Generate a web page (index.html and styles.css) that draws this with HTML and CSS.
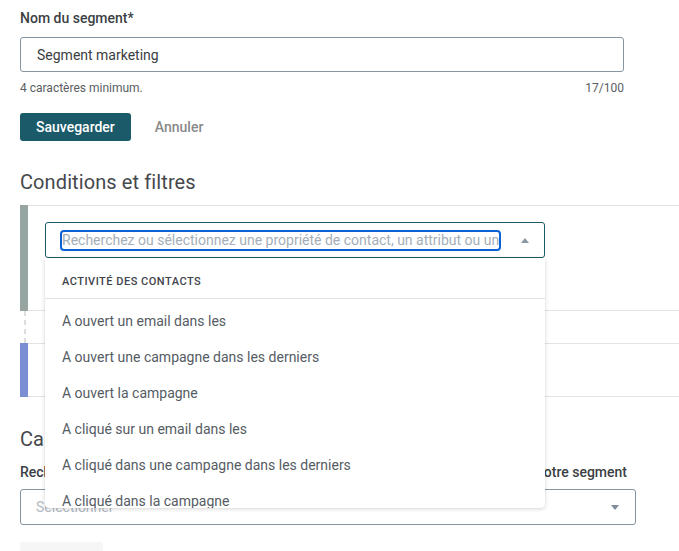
FILE: index.html
```html
<!DOCTYPE html>
<html lang="fr">
<head>
<meta charset="utf-8">
<title>Segment</title>
<link rel="stylesheet" href="styles.css">
</head>
<body>
<main class="page">
  <section class="name-field">
    <label class="field-label" for="segment-name">Nom du segment*</label>
    <input class="text-input" id="segment-name" type="text" value="Segment marketing">
    <div class="helper">
      <span>4 caractères minimum.</span>
      <span>17/100</span>
    </div>
    <div class="actions">
      <button class="btn-primary" type="button">Sauvegarder</button>
      <button class="btn-link" type="button">Annuler</button>
    </div>
  </section>

  <h2 class="section-title">Conditions et filtres</h2>

  <section class="conditions">
    <div class="cond">
      <div class="cond-bar cond-bar-gray"></div>
      <div class="cond-body cond-body-first">
        <div class="prop-select">
          <div class="search">Recherchez ou sélectionnez une propriété de contact, un attribut ou une activité</div>
          <svg class="caret" width="8" height="5" viewBox="0 0 8 5" aria-hidden="true"><polygon points="0,5 4,0 8,5" fill="#8c98a3"/></svg>
          <div class="menu">
            <div class="menu-header">ACTIVITÉ DES CONTACTS</div>
            <ul class="menu-list">
              <li class="menu-item">A ouvert un email dans les</li>
              <li class="menu-item">A ouvert une campagne dans les derniers</li>
              <li class="menu-item">A ouvert la campagne</li>
              <li class="menu-item">A cliqué sur un email dans les</li>
              <li class="menu-item">A cliqué dans une campagne dans les derniers</li>
              <li class="menu-item">A cliqué dans la campagne</li>
            </ul>
          </div>
        </div>
      </div>
    </div>
    <div class="connector"></div>
    <div class="cond">
      <div class="cond-bar cond-bar-blue"></div>
      <div class="cond-body cond-body-second"></div>
    </div>
  </section>

  <section class="calc">
    <h2 class="calc-title">Calculer la taille du segment</h2>
    <div class="calc-label"><span>Recherchez</span><span>Nombre de contacts dans votre segment</span></div>
    <div class="plain-select">
      <span>Sélectionner</span>
      <svg class="caret" width="8" height="5" viewBox="0 0 8 5" aria-hidden="true"><polygon points="0,0 8,0 4,5" fill="#808c97"/></svg>
    </div>
    <div class="ghost-btn"></div>
  </section>
</main>
</body>
</html>
```

FILE: styles.css
```css
* { box-sizing: border-box; }

html, body {
  margin: 0;
  padding: 0;
  background: #fff;
}

body {
  font-family: Roboto, "Noto Sans", "Liberation Sans", sans-serif;
  color: #3d4247;
  width: 679px;
  height: 551px;
  overflow: hidden;
}

.page {
  padding: 8px 0 0 20px;
}

.field-label {
  display: block;
  font-size: 14px;
  line-height: 20px;
  font-weight: 500;
  color: #3b3f44;
  margin-bottom: 9px;
}

.text-input {
  display: block;
  width: 604px;
  height: 35px;
  margin: 0;
  border: 1px solid #8595a2;
  border-radius: 3px;
  padding: 0 16px;
  font-family: inherit;
  font-size: 14px;
  color: #3a3e42;
  background: #fff;
  outline: none;
}

.helper {
  width: 604px;
  display: flex;
  justify-content: space-between;
  margin-top: 8px;
  font-size: 12px;
  line-height: 16px;
  color: #5a5e62;
}

.actions {
  display: flex;
  align-items: center;
  gap: 24px;
  margin-top: 17px;
}

.btn-primary {
  height: 28px;
  padding: 0 16px;
  background: #1b5a68;
  color: #fff;
  border: 0;
  border-radius: 3px;
  font-family: inherit;
  font-size: 14px;
  font-weight: 500;
}

.btn-link {
  background: none;
  border: 0;
  padding: 0;
  font-family: inherit;
  font-size: 14px;
  font-weight: 500;
  color: #8a8a8a;
}

.section-title {
  font-size: 20px;
  line-height: 24px;
  font-weight: 400;
  color: #45484c;
  margin: 29px 0 11px;
  letter-spacing: 0.1px;
}

.cond {
  display: flex;
}

.cond-bar {
  width: 8px;
  flex: none;
}

.cond-bar-gray { background: #97a5a2; }
.cond-bar-blue { background: #7a8fd1; }

.cond-body {
  flex: 1;
  border-top: 1px solid #e3e3e3;
  border-bottom: 1px solid #e3e3e3;
}

.cond-body-first {
  padding: 16px 0 52px 17px;
}

.cond-body-second {
  height: 54px;
}

.connector {
  width: 2px;
  height: 32px;
  margin-left: 4px;
  background: repeating-linear-gradient(to bottom, #dedede 0 5px, transparent 5px 9px);
}

.prop-select {
  position: relative;
  width: 500px;
  height: 36px;
  border: 1px solid #1b5a68;
  border-radius: 3px;
  display: flex;
  align-items: center;
  gap: 20px;
  padding: 0 15px 0 14px;
}

.search {
  flex: 1;
  min-width: 0;
  height: 21px;
  border: 2px solid #0b62d4;
  border-radius: 4px;
  font-size: 14px;
  line-height: 17px;
  color: #a4aeb8;
  white-space: nowrap;
  overflow: hidden;
}

.caret {
  flex: none;
  display: block;
}

.menu {
  position: absolute;
  top: calc(100% + 1px);
  left: -1px;
  width: 500px;
  height: 250px;
  overflow: hidden;
  background: #fff;
  border-radius: 0 0 4px 4px;
  box-shadow: 0 1px 4px rgba(0, 0, 0, 0.16), 0 0 1px rgba(0, 0, 0, 0.1);
  z-index: 5;
}

.menu-header {
  padding: 17px 17px 9px;
  font-size: 11px;
  line-height: 14px;
  font-weight: 500;
  color: #3f444a;
  letter-spacing: 0.5px;
  border-bottom: 1px solid #e3e3e3;
}

.menu-list {
  list-style: none;
  margin: 0;
  padding: 4px 0 0;
}

.menu-item {
  padding: 8px 17px;
  font-size: 14px;
  line-height: 20px;
  color: #555c64;
}

.calc-title {
  font-size: 20px;
  line-height: 24px;
  font-weight: 400;
  color: #45484c;
  margin: 30px 0 11px;
}

.calc-label {
  display: flex;
  justify-content: space-between;
  width: 607px;
  font-size: 14px;
  line-height: 20px;
  font-weight: 500;
  color: #3b3f44;
  margin-bottom: 7px;
}

.plain-select {
  width: 616px;
  height: 36px;
  border: 1px solid #8595a2;
  border-radius: 3px;
  display: flex;
  align-items: center;
  justify-content: space-between;
  padding: 0 16px 0 15px;
  color: #b2bac2;
  font-size: 14px;
}

.ghost-btn {
  margin-top: 17px;
  width: 83px;
  height: 32px;
  background: #f6f6f6;
  border-radius: 3px;
}
```
